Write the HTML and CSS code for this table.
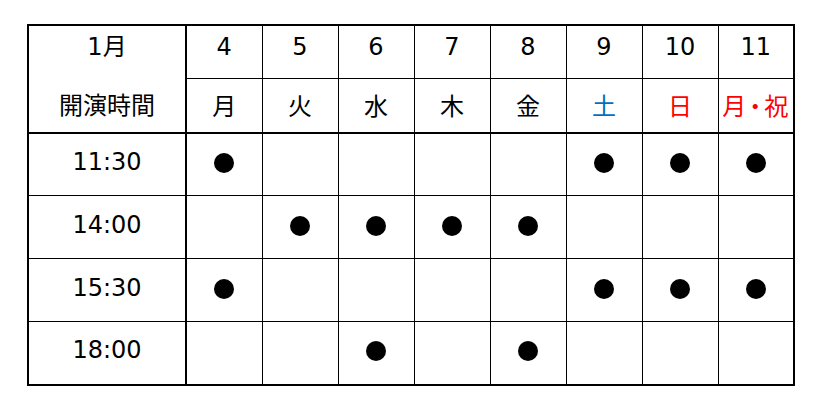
FILE: index.html
```html
<!DOCTYPE html>
<html lang="ja">
<head>
<meta charset="utf-8">
<link rel="stylesheet" href="styles.css">
</head>
<body>
<div class="wrap">
<table class="sched">
  <colgroup>
    <col class="c-first">
    <col class="c-day"><col class="c-day"><col class="c-day"><col class="c-day">
    <col class="c-day"><col class="c-day"><col class="c-day"><col class="c-day">
  </colgroup>
  <tr class="hd1">
    <th class="first" rowspan="2"><div class="month">1月</div><div class="label">開演時間</div></th>
    <th>4</th><th>5</th><th>6</th><th>7</th><th>8</th><th>9</th><th>10</th><th>11</th>
  </tr>
  <tr class="hd2">
    <th>月</th><th>火</th><th>水</th><th>木</th><th>金</th><th class="sat">土</th><th class="sun">日</th><th class="sun hol">月・祝</th>
  </tr>
  <tr>
    <td class="first">11:30</td>
    <td><span class="dot"></span></td><td></td><td></td><td></td><td></td><td><span class="dot"></span></td><td><span class="dot"></span></td><td><span class="dot"></span></td>
  </tr>
  <tr>
    <td class="first">14:00</td>
    <td></td><td><span class="dot"></span></td><td><span class="dot"></span></td><td><span class="dot"></span></td><td><span class="dot"></span></td><td></td><td></td><td></td>
  </tr>
  <tr>
    <td class="first">15:30</td>
    <td><span class="dot"></span></td><td></td><td></td><td></td><td></td><td><span class="dot"></span></td><td><span class="dot"></span></td><td><span class="dot"></span></td>
  </tr>
  <tr>
    <td class="first">18:00</td>
    <td></td><td></td><td><span class="dot"></span></td><td></td><td><span class="dot"></span></td><td></td><td></td><td></td>
  </tr>
</table>
</div>
</body>
</html>
```
FILE: styles.css
```css
html, body {
  margin: 0;
  padding: 0;
  background: #fff;
}
body {
  font-family: "DejaVu Sans", "Noto Sans CJK JP", sans-serif;
  color: #000;
}
.wrap {
  padding: 24px 0 0 27px;
}
.sched {
  border-collapse: collapse;
  table-layout: fixed;
  width: 767px;
  border: 2px solid #000;
}
.c-first { width: 158px; }
.c-day { width: 76px; }
.sched th, .sched td {
  border: 1px solid #000;
  padding: 0;
  text-align: center;
  vertical-align: middle;
  font-weight: normal;
  font-size: 24px;
  line-height: 1;
}
.sched .first {
  border-right: 2px solid #000;
}
.hd1 th {
  height: 53px;
  padding-bottom: 10px;
  box-sizing: border-box;
}
.hd2 th {
  height: 53px;
  border-bottom: 2px solid #000;
  font-family: "Noto Sans CJK JP", sans-serif;
}
.sched .hd1 .first {
  border-bottom: 2px solid #000;
  padding: 0;
  vertical-align: top;
}
.month {
  height: 53px;
  line-height: 42px;
}
.label {
  font-family: "Noto Sans CJK JP", sans-serif;
  height: 52px;
  line-height: 50px;
}
.sched .hol {
  letter-spacing: -3px;
  padding-right: 4px;
}
.sched td {
  height: 63px;
  padding-bottom: 5px;
  box-sizing: border-box;
}
.sat { color: #0070c0; }
.sun { color: #ff0000; }
.dot {
  display: inline-block;
  width: 20px;
  height: 20px;
  border-radius: 50%;
  background: #000;
  vertical-align: middle;
}
```
